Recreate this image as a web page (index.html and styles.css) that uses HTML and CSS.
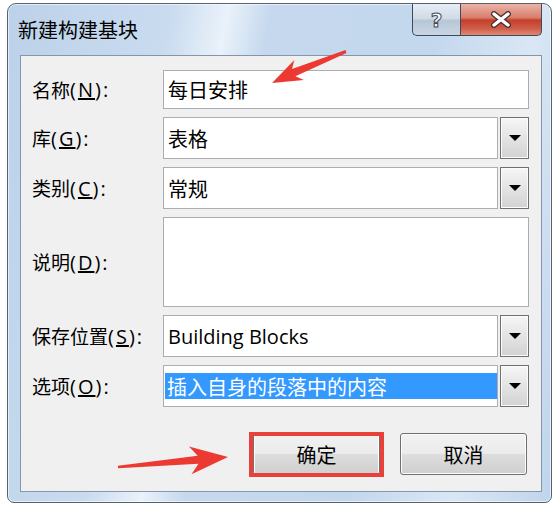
FILE: index.html
```html
<!DOCTYPE html>
<html lang="zh-CN">
<head>
  <meta charset="UTF-8" />
  <title>新建构建基块</title>
  <link rel="stylesheet" href="styles.css">
</head>
<body>
  <div class="window">
    <div class="titlebar">
      <div class="title">新建构建基块</div>
      <div class="caption">
        <div class="cap-btn help"><span class="qmark">?</span></div>
        <div class="cap-btn close">
          <svg width="22" height="17" viewBox="0 0 22 17">
            <path d="M4 3 L18 14 M18 3 L4 14" stroke="#4a3030" stroke-width="6" stroke-linecap="round" />
            <path d="M4 3 L18 14 M18 3 L4 14" stroke="#ffffff" stroke-width="3.4" stroke-linecap="round" />
          </svg>
        </div>
      </div>
    </div>

    <div class="panel">
      <div class="form">
        <label class="label">名称<span class="key">(<u>N</u>):</span></label>
        <div class="field">每日安排</div>

        <label class="label">库<span class="key">(<u>G</u>):</span></label>
        <div class="combo">
          <div class="field">表格</div>
          <div class="drop"></div>
        </div>

        <label class="label">类别<span class="key">(<u>C</u>):</span></label>
        <div class="combo">
          <div class="field">常规</div>
          <div class="drop"></div>
        </div>

        <label class="label">说明<span class="key">(<u>D</u>):</span></label>
        <div class="field memo"></div>

        <label class="label">保存位置<span class="key">(<u>S</u>):</span></label>
        <div class="combo">
          <div class="field">Building Blocks</div>
          <div class="drop"></div>
        </div>

        <label class="label">选项<span class="key">(<u>O</u>):</span></label>
        <div class="combo">
          <div class="field field-sel"><span class="selected">插入自身的段落中的内容</span></div>
          <div class="drop"></div>
        </div>
      </div>

      <div class="actions">
        <button class="btn btn-ok">确定</button>
        <button class="btn">取消</button>
      </div>
    </div>
  </div>

  <!-- annotation arrows drawn over the dialog -->
  <svg class="annot" width="560" height="512" viewBox="0 0 560 512">
    <polygon fill="#ec3a33" points="272,83 294.3,60.1 292,69 345.6,50.1 346.4,52.9 295.4,76.2 303.9,79.9" />
    <polygon fill="#ec3a33" points="228,457 188.9,446.5 197.7,455.7 117.9,465.8 118.1,468.2 198.5,463.7 191.5,474.3" />
  </svg>
</body>
</html>
```

FILE: styles.css
```css
* {
  box-sizing: border-box;
}

body {
  margin: 0;
  width: 560px;
  height: 512px;
  overflow: hidden;
  position: relative;
  background-color: #ffffff;
  font-family: "Open Sans", "Noto Sans CJK SC", sans-serif;
  color: #000000;
}

.window {
  display: flex;
  flex-direction: column;
  width: 545px;
  height: 500px;
  margin: 3px 0 0 7px;
  padding: 0 9px 10px 12px;
  border: 1px solid #56626f;
  border-radius: 9px 9px 7px 7px;
  background: linear-gradient(100deg, #bcd2ea 0%, #c9dbef 26%, #eaf2fa 35%, #c5d8ee 42%, #c3d7ed 68%, #d9e7f5 84%, #bfd4eb 100%);
  box-shadow: inset 0 0 0 1px rgba(255, 255, 255, 0.6);
}

.titlebar {
  display: flex;
  justify-content: space-between;
  align-items: flex-start;
  height: 51px;
}

.title {
  margin-left: -2px;
  padding-top: 13px;
  font-size: 20px;
  line-height: 28px;
}

.caption {
  display: flex;
}

.cap-btn {
  display: flex;
  align-items: center;
  justify-content: center;
  height: 32px;
  border: 1px solid #3d4a5a;
  border-top: none;
}

.help {
  width: 48px;
  border-right: none;
  border-radius: 0 0 0 5px;
  background: linear-gradient(#e6edf5, #cfdae6 48%, #b7c6d6 52%, #c8d5e3);
}

.qmark {
  font-family: "DejaVu Sans", sans-serif;
  font-size: 20px;
  font-weight: bold;
  color: #f6f8fa;
  -webkit-text-stroke: 1px #3f4a57;
}

.close {
  width: 82px;
  border-radius: 0 0 5px 0;
  background: linear-gradient(#ebb3a7, #d97e6c 44%, #c43f2a 52%, #cf5f4b 80%, #e08a74);
}

.panel {
  flex: 1;
  background-color: #f0f0f0;
  border: 1px solid #8496ab;
}

.form {
  display: grid;
  grid-template-columns: 131px 366px;
  grid-template-rows: 39px 42px 42px 90px 42px 42px;
  row-gap: 8px;
  padding: 14px 0 0 11px;
}

.label {
  display: flex;
  align-items: center;
  font-size: 19px;
}

.key {
  font-size: 20px;
  letter-spacing: 2px;
}

.field {
  display: flex;
  align-items: center;
  padding-left: 4px;
  background-color: #ffffff;
  border: 1px solid #abadb3;
  font-size: 20px;
  white-space: nowrap;
}

.memo {
  align-items: flex-start;
}

.combo {
  display: flex;
  gap: 2px;
}

.combo .field {
  flex: 1;
}

.drop {
  display: flex;
  align-items: center;
  justify-content: center;
  width: 29px;
  border: 1px solid #707070;
  background: linear-gradient(#f6f6f6, #e2e2e2 55%, #d2d2d2);
  box-shadow: inset 0 0 0 1px #fbfbfb;
}

.drop::after {
  content: "";
  border-left: 6px solid transparent;
  border-right: 6px solid transparent;
  border-top: 6px solid #000000;
}

.field-sel {
  padding-left: 1px;
}

.selected {
  display: flex;
  align-items: center;
  align-self: stretch;
  flex: 1;
  margin: 7px 0;
  padding-left: 2px;
  background-color: #3399ff;
  color: #ffffff;
}

.actions {
  display: flex;
  justify-content: flex-end;
  gap: 20px;
  padding: 26px 14px 0 0;
}

.btn {
  width: 127px;
  height: 42px;
  border: 1px solid #707070;
  border-radius: 3px;
  background: linear-gradient(#f2f2f2 0%, #ebebeb 50%, #dddddd 51%, #cfcfcf 100%);
  box-shadow: inset 0 0 0 1px #fcfcfc;
  font-family: "Open Sans", "Noto Sans CJK SC", sans-serif;
  font-size: 20px;
  color: #000000;
}

/* red annotation box round the OK button */
.btn-ok {
  position: relative;
}

.btn-ok::after {
  content: "";
  position: absolute;
  top: -2px;
  right: -5px;
  bottom: -3px;
  left: -5px;
  border: 4px solid #e8403a;
}

.annot {
  position: absolute;
  top: 0;
  left: 0;
  pointer-events: none;
}
```
